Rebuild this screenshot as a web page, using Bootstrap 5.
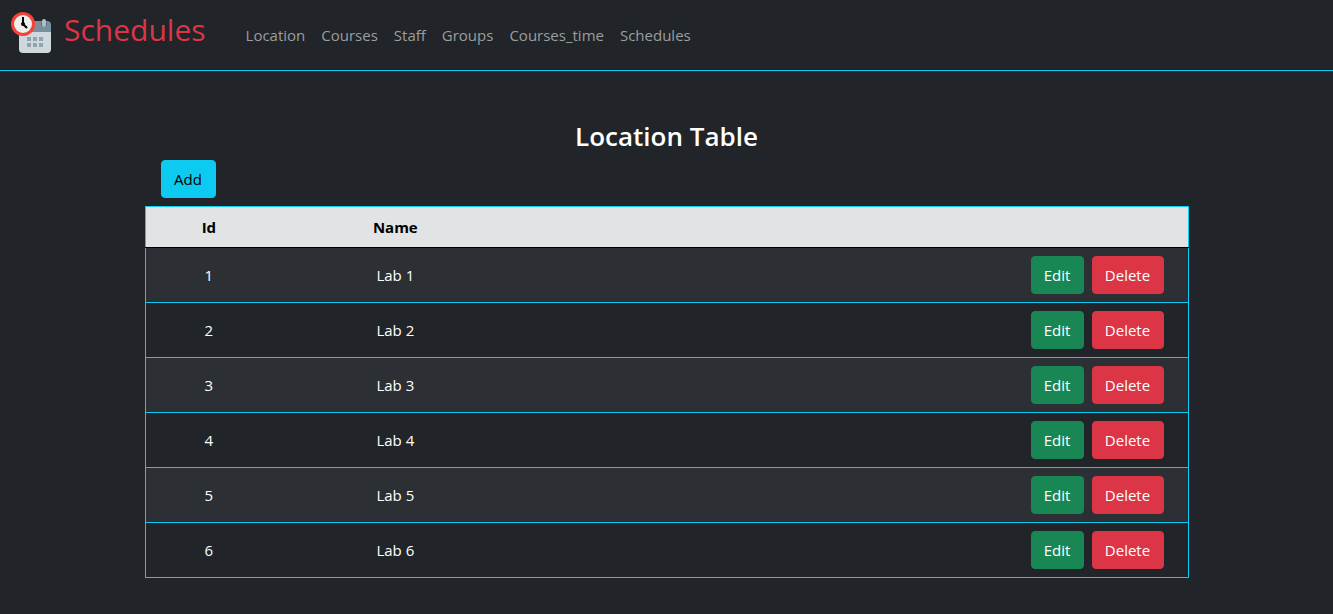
<!DOCTYPE html>
<html lang="en">
<head>
<meta charset="utf-8">
<meta name="viewport" content="width=device-width, initial-scale=1">
<title>Schedules</title>
<link href="https://cdn.jsdelivr.net/npm/bootstrap@5.3.0/dist/css/bootstrap.min.css" rel="stylesheet">
<style>
  body { font-family: "Segoe UI", "Open Sans", "Noto Sans", sans-serif; font-size: 15px; line-height: 24px; }
  .site-nav { min-height: 71px; padding: 0 8px; }
  .site-nav .navbar-brand { font-size: 30px; line-height: 40px; padding: 0; margin-right: 32px; }
  .site-nav .nav-link { color: #9b9d9e; }
  .site-nav .nav-link:hover { color: #fff; }
  .brand-text { margin-bottom: 10px; }
  .page-title { font-size: 26px; line-height: 34px; font-weight: 600; margin: 48px 0 7px; }
  .btn { font-size: 15px; line-height: 24px; border-radius: 4px; padding: 6px 0; }
  .btn-add { width: 55px; }
  .btn-edit { width: 53px; }
  .btn-delete { width: 72px; }
  .loc-table { --bs-table-bg: #212529; --bs-table-color: #fff; --bs-table-striped-bg: #2c3034; --bs-table-striped-color: #fff; border-color: #0dcaf0; }
  .loc-table tr > :not(caption) { border-width: 0 0 1px; }
  .loc-table thead th { background: #e2e3e5; color: #000; border-bottom-color: #000; box-shadow: none; }
  .col-id { width: 12.2%; }
  .col-name { width: 23.6%; }
</style>
</head>
<body class="bg-dark text-white">
<nav class="navbar navbar-expand navbar-dark bg-dark border-bottom border-info site-nav">
  <a class="navbar-brand d-flex align-items-center gap-2 text-danger" href="#">
    <svg width="48" height="48" viewBox="0 3 48 48" aria-hidden="true">
      <path d="M11 24h32v17a4 4 0 0 1-4 4H15a4 4 0 0 1-4-4z" fill="#cfd8dc"/>
      <path d="M11 23v-6a4 4 0 0 1 4-4h24a4 4 0 0 1 4 4v7H11z" fill="#78909c"/>
      <circle cx="36" cy="16" r="3" fill="#546e7a"/>
      <rect x="34" y="11" width="4" height="8" rx="2" fill="#b0bec5"/>
      <path d="M19 29h4v4h-4zm6 0h4v4h-4zm6 0h4v4h-4zM19 35h4v4h-4zm6 0h4v4h-4zm6 0h4v4h-4z" fill="#90a4ae"/>
      <circle cx="15" cy="16" r="12" fill="#f44336"/>
      <circle cx="15" cy="16" r="9" fill="#eee"/>
      <path d="M15 9v7l4 4" fill="none" stroke="#000" stroke-width="2"/>
      <circle cx="15" cy="16" r="2" fill="#000"/>
    </svg>
    <span class="brand-text">Schedules</span>
  </a>
  <ul class="navbar-nav">
    <li class="nav-item"><a class="nav-link" href="#">Location</a></li>
    <li class="nav-item"><a class="nav-link" href="#">Courses</a></li>
    <li class="nav-item"><a class="nav-link" href="#">Staff</a></li>
    <li class="nav-item"><a class="nav-link" href="#">Groups</a></li>
    <li class="nav-item"><a class="nav-link" href="#">Courses_time</a></li>
    <li class="nav-item"><a class="nav-link" href="#">Schedules</a></li>
  </ul>
</nav>
<main class="container px-5">
  <h1 class="page-title text-center">Location Table</h1>
  <button type="button" class="btn btn-info btn-add ms-3 mb-2">Add</button>
  <table class="table table-striped align-middle text-center border border-info loc-table">
    <thead>
      <tr><th class="col-id" scope="col">Id</th><th class="col-name" scope="col">Name</th><th scope="col"></th></tr>
    </thead>
    <tbody>
      <tr><td>1</td><td>Lab 1</td><td><div class="d-flex justify-content-end gap-2 pe-3"><button type="button" class="btn btn-success btn-edit">Edit</button><button type="button" class="btn btn-danger btn-delete">Delete</button></div></td></tr>
      <tr><td>2</td><td>Lab 2</td><td><div class="d-flex justify-content-end gap-2 pe-3"><button type="button" class="btn btn-success btn-edit">Edit</button><button type="button" class="btn btn-danger btn-delete">Delete</button></div></td></tr>
      <tr><td>3</td><td>Lab 3</td><td><div class="d-flex justify-content-end gap-2 pe-3"><button type="button" class="btn btn-success btn-edit">Edit</button><button type="button" class="btn btn-danger btn-delete">Delete</button></div></td></tr>
      <tr><td>4</td><td>Lab 4</td><td><div class="d-flex justify-content-end gap-2 pe-3"><button type="button" class="btn btn-success btn-edit">Edit</button><button type="button" class="btn btn-danger btn-delete">Delete</button></div></td></tr>
      <tr><td>5</td><td>Lab 5</td><td><div class="d-flex justify-content-end gap-2 pe-3"><button type="button" class="btn btn-success btn-edit">Edit</button><button type="button" class="btn btn-danger btn-delete">Delete</button></div></td></tr>
      <tr><td>6</td><td>Lab 6</td><td><div class="d-flex justify-content-end gap-2 pe-3"><button type="button" class="btn btn-success btn-edit">Edit</button><button type="button" class="btn btn-danger btn-delete">Delete</button></div></td></tr>
    </tbody>
  </table>
</main>
<script src="https://cdn.jsdelivr.net/npm/bootstrap@5.3.0/dist/js/bootstrap.bundle.min.js"></script>
</body>
</html>
